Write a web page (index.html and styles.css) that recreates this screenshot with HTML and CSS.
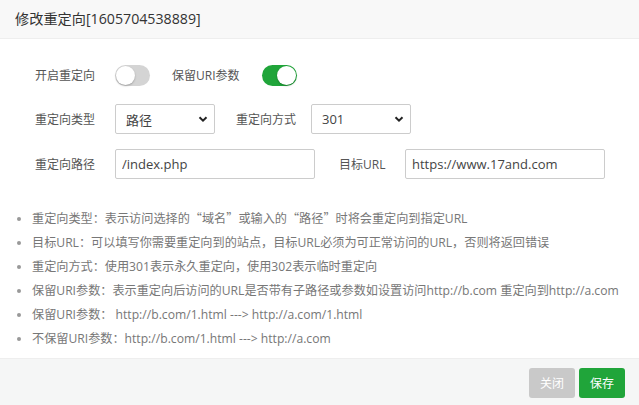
FILE: index.html
```html
<!DOCTYPE html>
<html>
<head>
  <meta charset="utf-8" />
  <title>修改重定向</title>
  <link rel="stylesheet" href="styles.css">
</head>
<body>
  <div class="layer">
    <div class="layer-title">修改重定向[1605704538889]</div>

    <div class="layer-content">
      <div class="form-line">
        <span class="tname">开启重定向</span>
        <span class="switch"></span>
        <span class="tname2">保留URI参数</span>
        <span class="switch on"></span>
      </div>

      <div class="form-line">
        <span class="tname">重定向类型</span>
        <div class="select w100">
          <span>路径</span>
          <svg viewBox="0 0 10 10"><path d="M1.5 3.2 5 6.6 8.5 3.2" /></svg>
        </div>
        <span class="tname2">重定向方式</span>
        <div class="select w100">
          <span>301</span>
          <svg viewBox="0 0 10 10"><path d="M1.5 3.2 5 6.6 8.5 3.2" /></svg>
        </div>
      </div>

      <div class="form-line">
        <span class="tname">重定向路径</span>
        <input class="input w200" type="text" value="/index.php">
        <span class="tname3">目标URL</span>
        <input class="input w200" type="text" value="https://www.17and.com">
      </div>

      <ul class="help">
        <li>重定向类型：表示访问选择的<span class="q">“</span>域名<span class="q">”</span>或输入的<span class="q">“</span>路径<span class="q">”</span>时将会重定向到指定URL</li>
        <li>目标URL：可以填写你需要重定向到的站点，目标URL必须为可正常访问的URL，否则将返回错误</li>
        <li>重定向方式：使用301表示永久重定向，使用302表示临时重定向</li>
        <li>保留URI参数：表示重定向后访问的URL是否带有子路径或参数如设置访问http://b.com 重定向到http://a.com</li>
        <li>保留URI参数：&nbsp;http://b.com/1.html ---&gt; http://a.com/1.html</li>
        <li>不保留URI参数：http://b.com/1.html ---&gt; http://a.com</li>
      </ul>
    </div>

    <div class="layer-btns">
      <button class="btn btn-close">关闭</button>
      <button class="btn btn-save">保存</button>
    </div>
  </div>
</body>
</html>
```

FILE: styles.css
```css
* {
  margin: 0;
  padding: 0;
  box-sizing: border-box;
  font-family: "Open Sans", "Noto Sans CJK SC", sans-serif;
}

body {
  background: #fff;
  width: 639px;
  height: 405px;
  overflow: hidden;
}

.layer {
  display: flex;
  flex-direction: column;
  height: 405px;
}

.layer-title {
  height: 39px;
  line-height: 38px;
  padding-left: 15px;
  font-size: 14.2px;
  color: #333;
  background: #f8f8f8;
  border-bottom: 1px solid #eee;
}

.layer-content {
  flex: 1;
  padding-top: 21px;
}

.form-line {
  display: flex;
  align-items: center;
  height: 30px;
  margin-bottom: 14px;
  font-size: 12px;
  color: #555;
}

.form-line + .form-line {
  margin-bottom: 15px;
}

.tname {
  width: 115px;
  padding-left: 35px;
}

.tname2 {
  width: 112px;
  padding-left: 22px;
}

.form-line .select + .tname2 {
  width: 96px;
  padding-left: 21px;
}

.tname3 {
  width: 90px;
  padding-left: 24px;
}

.switch {
  position: relative;
  width: 35px;
  height: 21px;
  border-radius: 11px;
  background: #d4d4d4;
}

.switch::after {
  content: "";
  position: absolute;
  left: 1px;
  top: 1px;
  width: 19px;
  height: 19px;
  border-radius: 50%;
  background: #fff;
  box-shadow: 0 1px 2px rgba(0,0,0,0.25);
}

.switch.on {
  background: #20a53a;
}

.switch.on::after {
  left: 15px;
}

.select {
  display: flex;
  align-items: center;
  justify-content: space-between;
  height: 30px;
  padding: 0 6px 0 10px;
  border: 1px solid #ccc;
  border-radius: 2px;
  font-size: 13px;
  color: #444;
}

.select svg {
  width: 10px;
  height: 10px;
  fill: none;
  stroke: #222;
  stroke-width: 2;
}

.w100 {
  width: 100px;
}

.w200 {
  width: 200px;
}

.input {
  height: 30px;
  padding: 0 6px;
  border: 1px solid #ccc;
  border-radius: 2px;
  font-size: 13px;
  color: #444;
  outline: none;
}

.help {
  margin-top: 27px;
  padding-left: 32px;
  font-size: 12.15px;
  color: #777;
  line-height: 24px;
}

.help li::marker {
  color: #999;
}

.q {
  font-family: "Noto Sans CJK SC", sans-serif;
}

.layer-btns {
  display: flex;
  justify-content: flex-end;
  gap: 4px;
  height: 47px;
  padding: 9px 14px 0 0;
  background: #f5f6f6;
  border-top: 1px solid #eee;
}

.btn {
  width: 46px;
  height: 30px;
  border: none;
  border-radius: 3px;
  color: #fff;
  font-size: 12px;
}

.btn-close {
  background: #c9c9c9;
}

.btn-save {
  background: #20a53a;
}
```
